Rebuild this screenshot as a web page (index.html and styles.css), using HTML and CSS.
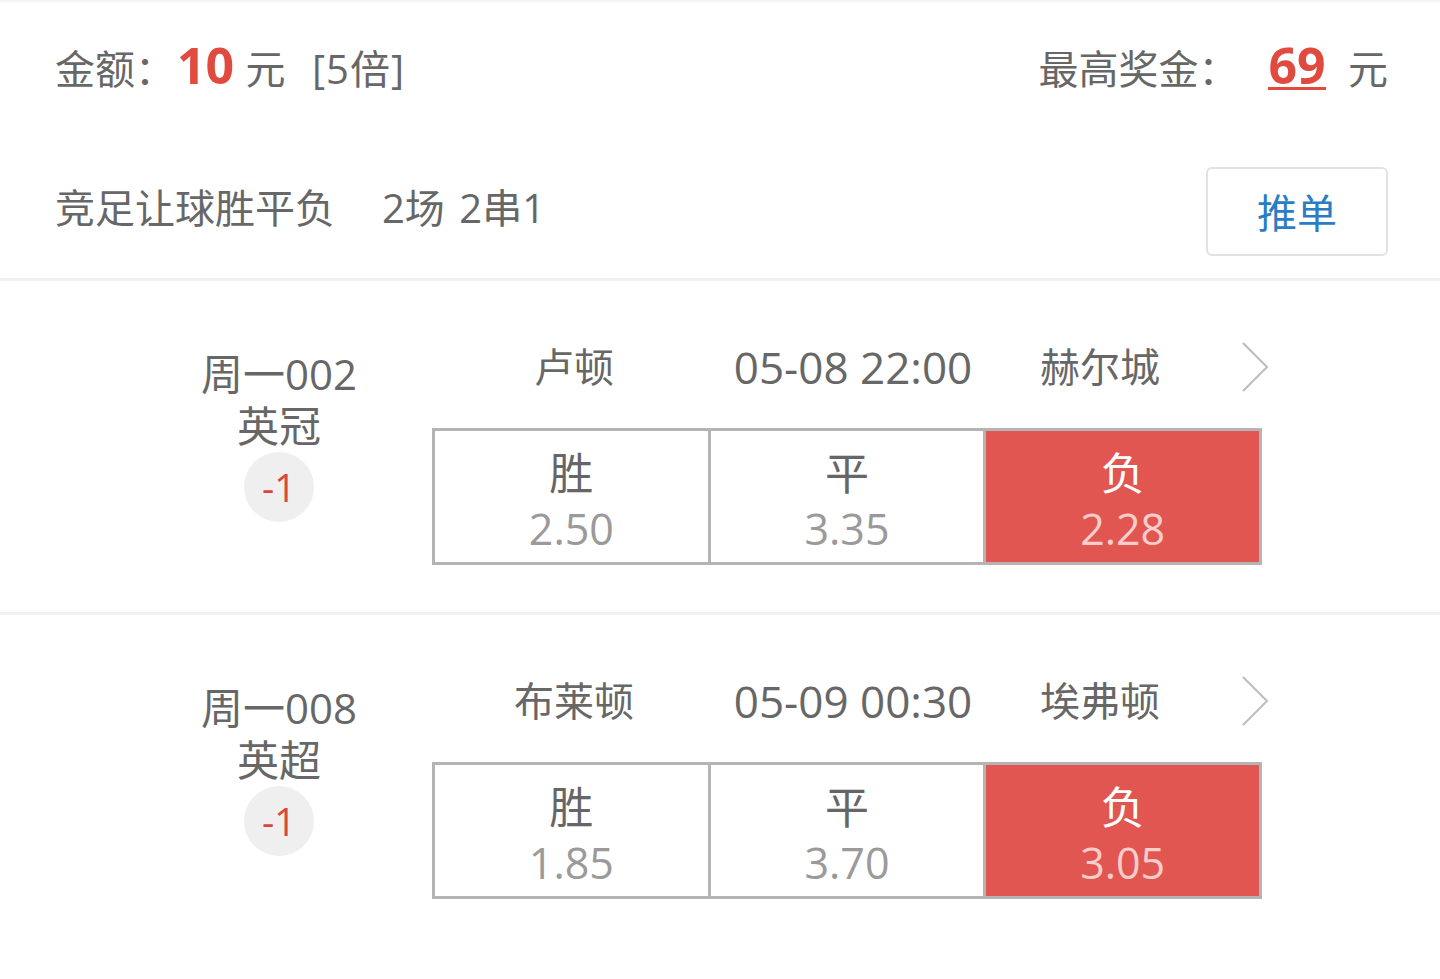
FILE: index.html
```html
<!DOCTYPE html>
<html lang="zh-CN">
<head>
<meta charset="utf-8">
<title>投注详情</title>
<link rel="stylesheet" href="styles.css">
</head>
<body>
<div class="page">
  <section class="summary">
    <div class="row row-amount">
      <div class="amount">金额：<span class="num-red">10</span> 元 <span class="mult">[5倍]</span></div>
      <div class="prize">最高奖金：<span class="prize-num">69</span> 元</div>
    </div>
    <div class="row row-type">
      <div class="type">竞足让球胜平负<span class="type-gap"></span>2场 2串1</div>
      <button class="push-btn">推单</button>
    </div>
  </section>

  <section class="match">
    <div class="match-left">
      <div class="line">周一002</div>
      <div class="line">英冠</div>
      <div class="badge">-1</div>
    </div>
    <div class="match-right">
      <div class="teams">
        <span class="home">卢顿</span>
        <span class="time">05-08 22:00</span>
        <span class="away">赫尔城</span>
        <svg class="chev" width="30" height="52" viewBox="0 0 30 52"><polyline points="3,2 27,26 3,50" fill="none" stroke="#bdbdbd" stroke-width="2"/></svg>
      </div>
      <div class="odds">
        <div class="cell"><div class="lab">胜</div><div class="val">2.50</div></div>
        <div class="cell"><div class="lab">平</div><div class="val">3.35</div></div>
        <div class="cell selected"><div class="lab">负</div><div class="val">2.28</div></div>
      </div>
    </div>
  </section>

  <section class="match">
    <div class="match-left">
      <div class="line">周一008</div>
      <div class="line">英超</div>
      <div class="badge">-1</div>
    </div>
    <div class="match-right">
      <div class="teams">
        <span class="home">布莱顿</span>
        <span class="time">05-09 00:30</span>
        <span class="away">埃弗顿</span>
        <svg class="chev" width="30" height="52" viewBox="0 0 30 52"><polyline points="3,2 27,26 3,50" fill="none" stroke="#bdbdbd" stroke-width="2"/></svg>
      </div>
      <div class="odds">
        <div class="cell"><div class="lab">胜</div><div class="val">1.85</div></div>
        <div class="cell"><div class="lab">平</div><div class="val">3.70</div></div>
        <div class="cell selected"><div class="lab">负</div><div class="val">3.05</div></div>
      </div>
    </div>
  </section>
</div>
</body>
</html>
```

FILE: styles.css
```css
html, body {
  margin: 0;
  padding: 0;
  background: #ffffff;
}
body {
  font-family: "Open Sans", "Noto Sans CJK SC", "Noto Sans", sans-serif;
  color: #676767;
}
.page {
  width: 1440px;
  border-top: 2px solid #f7f3f3;
}
.summary {
  padding: 0 52px 0 55px;
  border-bottom: 3px solid #f1f1f1;
}
.row {
  display: flex;
  align-items: center;
  justify-content: space-between;
  box-sizing: border-box;
}
.row-amount {
  height: 138px;
  padding-bottom: 4px;
  font-size: 40px;
  line-height: 52px;
}
.amount, .prize {
  height: 52px;
}
.num-red {
  color: #e04a3f;
  font-weight: 700;
  font-size: 50px;
  margin: 0 1px 0 2px;
  display: inline-block;
  line-height: 40px;
}
.mult {
  margin-left: 16px;
  letter-spacing: 1px;
}
.prize-num {
  color: #e04a3f;
  font-weight: 700;
  font-size: 50px;
  margin: 0 12px 0 30px;
  border-bottom: 3px solid #e04a3f;
  display: inline-block;
  line-height: 40px;
  padding-bottom: 2px;
}
.row-type {
  height: 138px;
  padding-bottom: 2px;
  font-size: 40px;
  line-height: 52px;
}
.type {
  word-spacing: 4px;
}
.type-gap {
  display: inline-block;
  width: 47px;
}
.push-btn {
  width: 182px;
  height: 89px;
  border: 2px solid #e2e2e2;
  border-radius: 6px;
  background: #fff;
  color: #2a7dc4;
  font-family: "Noto Sans CJK SC", "Noto Sans", sans-serif;
  font-size: 40px;
  padding: 0;
  margin-top: 6px;
}
.match {
  display: flex;
  padding: 60px 0 47px 179px;
  border-bottom: 3px solid #f1f1f1;
}
.match:last-child {
  border-bottom: none;
}
.match-left {
  width: 200px;
  margin-top: 7px;
  display: flex;
  flex-direction: column;
  align-items: center;
  font-size: 42px;
}
.match-left .line {
  height: 52px;
  line-height: 52px;
}
.badge {
  width: 70px;
  height: 70px;
  border-radius: 50%;
  background: #efefef;
  color: #d9473d;
  font-size: 38px;
  line-height: 70px;
  text-align: center;
}
.match-right {
  margin-left: 53px;
}
.teams {
  display: grid;
  grid-template-columns: 284px 274px 220px 1fr;
  align-items: center;
  height: 52px;
  font-size: 40px;
  line-height: 52px;
  margin-bottom: 35px;
}
.teams span {
  text-align: center;
}
.teams .time {
  font-size: 44px;
}
.chev {
  margin-left: 30px;
}
.odds {
  display: flex;
  width: 830px;
  height: 137px;
  box-sizing: border-box;
  border: 3px solid #b4b4b4;
}
.cell {
  flex: 1;
  text-align: center;
  padding-top: 14px;
  box-sizing: border-box;
  border-left: 3px solid #b4b4b4;
}
.cell:first-child {
  border-left: none;
}
.lab {
  font-size: 44px;
  line-height: 56px;
  height: 56px;
  color: #666;
}
.val {
  font-size: 43px;
  line-height: 56px;
  height: 56px;
  color: #9a9a9a;
}
.cell.selected {
  background: #e25652;
}
.cell.selected .lab {
  color: #ffffff;
}
.cell.selected .val {
  color: #f8cdca;
}
```
